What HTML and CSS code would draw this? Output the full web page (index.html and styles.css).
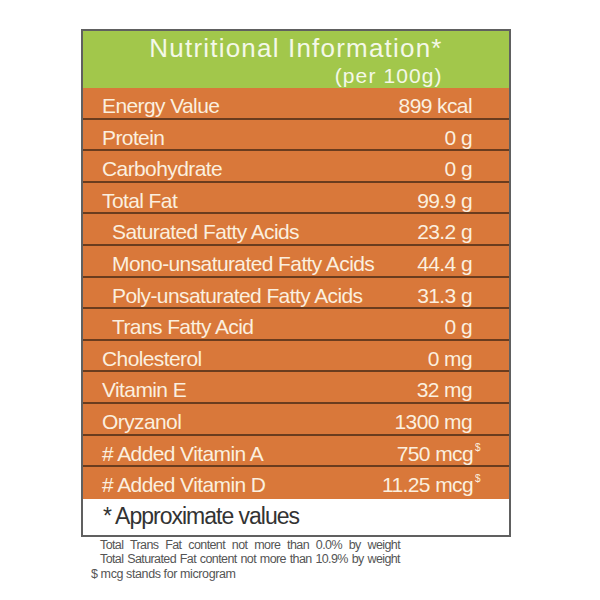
FILE: index.html
```html
<!DOCTYPE html>
<html>
<head>
<meta charset="utf-8">
<link rel="stylesheet" href="styles.css">
</head>
<body>
<div class="label">
  <div class="head">
    <div class="head-inner">
      <div class="title">Nutritional Information*</div>
      <div class="per">(per 100g)</div>
    </div>
  </div>
  <div class="rows">
    <div class="row"><span>Energy Value</span><span>899 kcal</span></div>
    <div class="row"><span>Protein</span><span>0 g</span></div>
    <div class="row"><span>Carbohydrate</span><span>0 g</span></div>
    <div class="row"><span>Total Fat</span><span>99.9 g</span></div>
    <div class="row sub"><span>Saturated Fatty Acids</span><span>23.2 g</span></div>
    <div class="row sub"><span>Mono-unsaturated Fatty Acids</span><span>44.4 g</span></div>
    <div class="row sub"><span>Poly-unsaturated Fatty Acids</span><span>31.3 g</span></div>
    <div class="row sub"><span>Trans Fatty Acid</span><span>0 g</span></div>
    <div class="row"><span>Cholesterol</span><span>0 mg</span></div>
    <div class="row"><span>Vitamin E</span><span>32 mg</span></div>
    <div class="row"><span>Oryzanol</span><span>1300 mg</span></div>
    <div class="row"><span># Added Vitamin A</span><span class="val">750 mcg<sup class="ds">$</sup></span></div>
    <div class="row"><span># Added Vitamin D</span><span class="val">11.25 mcg<sup class="ds">$</sup></span></div>
  </div>
  <div class="note">* Approximate values</div>
</div>
<div class="foot">
  <div class="fl">Total Trans Fat content not more than 0.0% by weight</div>
  <div class="fl">Total Saturated Fat content not more than 10.9% by weight</div>
  <div class="fl3">$ mcg stands for microgram</div>
</div>
</body>
</html>
```
FILE: styles.css
```css
html, body {
  margin: 0;
  padding: 0;
  background: #ffffff;
}
body {
  font-family: "Liberation Sans", Arial, sans-serif;
}
.label {
  margin: 29px 0 0 81px;
  width: 430px;
  box-sizing: border-box;
  border: 2px solid #606060;
}
.head {
  height: 57px;
  background: #a2c74b;
  display: flex;
  justify-content: center;
  color: #f4f8e8;
}
.head-inner {
  padding-top: 3px;
}
.title {
  font-size: 26px;
  line-height: 29px;
  letter-spacing: 1.2px;
  white-space: nowrap;
}
.per {
  font-size: 21px;
  line-height: 22px;
  margin-top: 2px;
  letter-spacing: 1.1px;
  text-align: right;
}
.rows {
  background: #d9783a;
}
.row {
  height: 31.6px;
  box-sizing: border-box;
  display: flex;
  justify-content: space-between;
  padding: 6px 37px 0 19px;
  font-size: 21px;
  line-height: 24px;
  letter-spacing: -0.6px;
  color: #fbefdf;
  border-bottom: 2px solid #6a3c1e;
  white-space: nowrap;
}
.row:last-child {
  border-bottom-color: #d9783a;
}
.row.sub {
  padding-left: 29px;
}
.val {
  white-space: nowrap;
}
.ds {
  font-size: 10px;
  line-height: 0;
  vertical-align: 0;
  position: relative;
  top: -10px;
  margin-right: -8px;
  margin-left: 2px;
}
.note {
  height: 36px;
  box-sizing: border-box;
  padding: 4px 0 0 20px;
  font-size: 23px;
  line-height: 26px;
  letter-spacing: -1px;
  color: #333333;
  background: #ffffff;
}
.foot {
  padding-left: 91px;
  margin-top: 1px;
  font-size: 12.5px;
  line-height: 14.5px;
  color: #555555;
}
.fl {
  width: 300px;
  margin-left: 9px;
  text-align: justify;
  text-align-last: justify;
  letter-spacing: -0.6px;
  white-space: nowrap;
}
.fl3 {
  letter-spacing: -0.4px;
}
```
